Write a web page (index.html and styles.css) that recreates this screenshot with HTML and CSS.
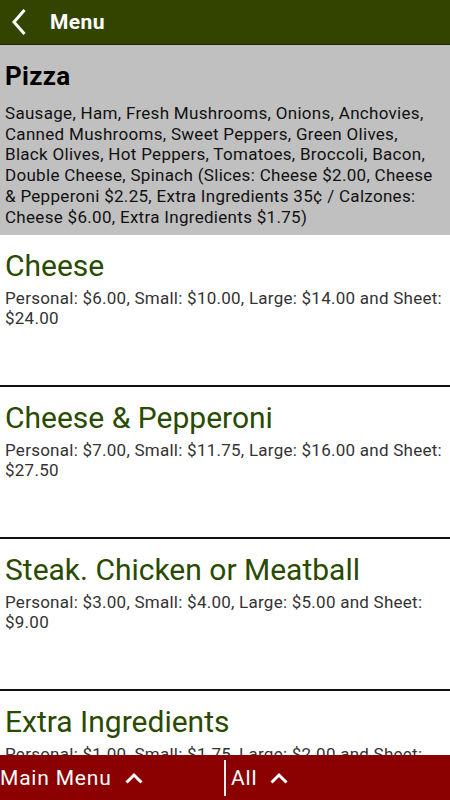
FILE: index.html
```html
<!DOCTYPE html>
<html lang="en">
    <head>
        <meta charset="UTF-8" />
        <meta name="viewport" content="width=device-width, initial-scale=1.0" />
        <title>Menu</title>
        <link rel="stylesheet" href="styles.css">
    </head>
    <body>
        <header class="topbar">
            <svg class="back" width="16" height="28" viewBox="0 0 16 28">
                <path d="M13.5 2 L3 14 L13.5 26" fill="none" stroke="#fff" stroke-width="3" />
            </svg>
            <h1>Menu</h1>
        </header>

        <main class="list">
            <section class="category">
                <h2>Pizza</h2>
                <p>Sausage, Ham, Fresh Mushrooms, Onions, Anchovies, Canned Mushrooms, Sweet Peppers, Green Olives, Black Olives, Hot Peppers, Tomatoes, Broccoli, Bacon, Double Cheese, Spinach (Slices: Cheese $2.00, Cheese &amp; Pepperoni $2.25, Extra Ingredients 35¢ / Calzones: Cheese $6.00, Extra Ingredients $1.75)</p>
            </section>

            <div class="item">
                <h3>Cheese</h3>
                <p>Personal: $6.00, Small: $10.00, Large: $14.00 and Sheet: $24.00</p>
            </div>
            <div class="item">
                <h3>Cheese &amp; Pepperoni</h3>
                <p>Personal: $7.00, Small: $11.75, Large: $16.00 and Sheet: $27.50</p>
            </div>
            <div class="item">
                <h3>Steak. Chicken or Meatball</h3>
                <p>Personal: $3.00, Small: $4.00, Large: $5.00 and Sheet: $9.00</p>
            </div>
            <div class="item">
                <h3>Extra Ingredients</h3>
                <p>Personal: $1.00, Small: $1.75, Large: $2.00 and Sheet: $3.00</p>
            </div>
        </main>

        <footer class="bottombar">
            <div class="tab">
                Main Menu
                <svg class="up" width="20" height="12" viewBox="0 0 20 12">
                    <path d="M2.5 10.5 L10 3 L17.5 10.5" fill="none" stroke="#fff" stroke-width="3" />
                </svg>
            </div>
            <div class="tab tab-right">
                All
                <svg class="up" width="20" height="12" viewBox="0 0 20 12">
                    <path d="M2.5 10.5 L10 3 L17.5 10.5" fill="none" stroke="#fff" stroke-width="3" />
                </svg>
            </div>
        </footer>
    </body>
</html>
```

FILE: styles.css
```css
html, body {
    margin: 0;
    padding: 0;
}
body {
    display: flex;
    flex-direction: column;
    height: 100vh;
    overflow: hidden;
    font-family: Roboto, "Liberation Sans", sans-serif;
    background-color: white;
}

.topbar {
    flex: none;
    display: flex;
    align-items: center;
    height: 44px;
    padding: 0 0 0 11px;
    background-color: #334400;
    border-bottom: 1px solid #1c2a00;
}
.topbar .back {
    display: block;
}
.topbar h1 {
    margin: 0 0 0 23px;
    color: white;
    font-size: 21px;
    font-weight: 700;
    letter-spacing: 0.4px;
}

.list {
    flex: 1;
    overflow: hidden;
}

.category {
    background-color: #c0c0c0;
    padding: 14px 5px 8px;
}
.category h2 {
    margin: 0 0 10px;
    font-size: 26px;
    font-weight: 700;
    line-height: 34px;
    color: black;
    letter-spacing: 0.3px;
}
.category p {
    margin: 0;
    font-size: 17px;
    line-height: 20.7px;
    color: #111;
    letter-spacing: 0.3px;
}

.item {
    height: 152px;
    padding: 11px 5px 0;
    box-sizing: border-box;
    border-bottom: 2px solid #111;
}
.item h3 {
    margin: 0 0 2px;
    font-size: 30px;
    font-weight: 400;
    line-height: 40px;
    color: #2a4a00;
}
.item p {
    margin: 0;
    font-size: 17px;
    line-height: 20px;
    color: #333;
    letter-spacing: 0.25px;
}

.bottombar {
    flex: none;
    display: flex;
    align-items: center;
    height: 45px;
    background-color: #8b0000;
    color: white;
    font-size: 21px;
    letter-spacing: 0.8px;
}
.tab {
    display: flex;
    align-items: center;
    gap: 12px;
    width: 224px;
    height: 100%;
    box-sizing: border-box;
}
.tab-right {
    height: 36px;
    padding-left: 5px;
    border-left: 2px solid #eee;
}
.up {
    display: block;
}
```
